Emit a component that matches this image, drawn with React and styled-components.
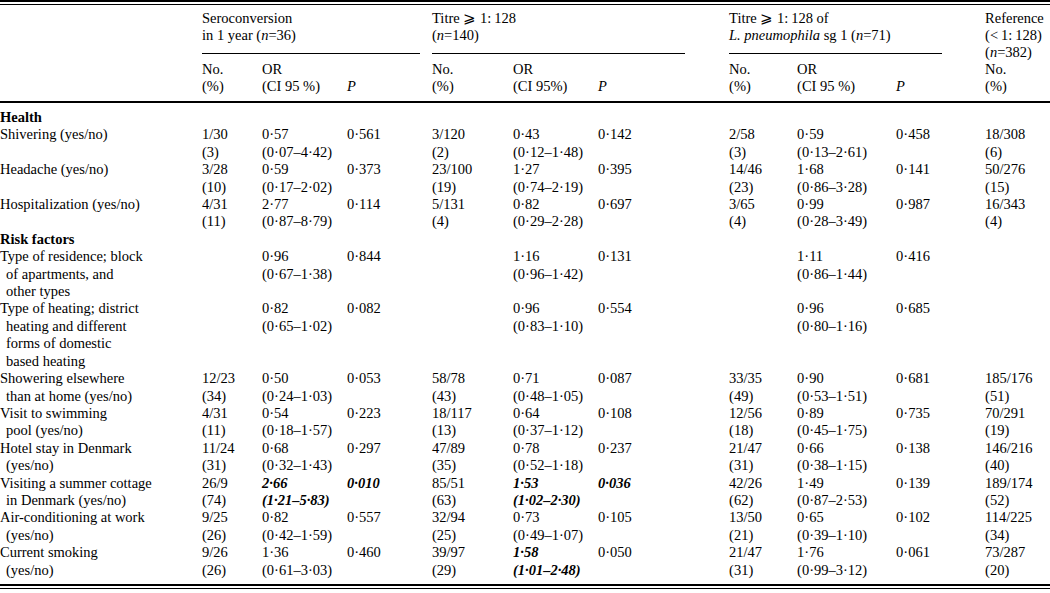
import React from 'react'
import styled, { createGlobalStyle } from 'styled-components'

const GlobalStyle = createGlobalStyle`
  html, body {
    margin: 0;
    padding: 0;
    background: #ffffff;
  }
  body {
    font-family: "Liberation Serif", "Times New Roman", "DejaVu Serif", serif;
    color: #000000;
  }
`

const Page = styled.div`
  width: 1050px;
  font-size: 14.5px;
`

const TopRule = styled.div`
  height: 2px;
  border-top: 2px solid #000;
  border-bottom: 1px solid #000;
`

const BottomRule = styled.div`
  margin-top: 5px;
  height: 2px;
  border-top: 2px solid #000;
  border-bottom: 1px solid #000;
`

const Table = styled.table`
  width: 1050px;
  table-layout: fixed;
  border-collapse: collapse;
  border-spacing: 0;
  font-size: inherit;

  th {
    font-weight: normal;
    text-align: left;
    padding: 0;
  }
  td {
    padding: 0;
  }
`

const I = styled.i`
  font-style: italic;
`

const HeadCell = styled.th`
  border-bottom: 2px solid #000;
`

const GroupCell = styled.th`
  vertical-align: top;
  line-height: 17px;
  padding-top: 5px !important;
`

const GroupLabel = styled.div`
  margin-right: ${p => p.$gap}px;
  padding-bottom: 9px;
  border-bottom: 1px solid #000;
  white-space: nowrap;
`

const SubHead = styled.th`
  vertical-align: top;
  line-height: 17px;
  padding: 7px 0 6px 0 !important;
  border-bottom: 2px solid #000;
  white-space: nowrap;
`

const RefHead = styled.th`
  vertical-align: bottom;
  line-height: 17px;
  padding-bottom: 6px !important;
  border-bottom: 2px solid #000;
  white-space: nowrap;
`

const SectionCell = styled.td`
  font-weight: bold;
  line-height: 17.4px;
  padding-top: ${p => (p.$lead ? '6px' : '0')} !important;
`

const LabelCell = styled.td`
  vertical-align: top;
  line-height: 17.4px;
`

const LabelLine = styled.div`
  padding-left: ${p => (p.$cont ? '6px' : '0')};
  white-space: nowrap;
`

const Cell = styled.td`
  vertical-align: top;
  line-height: 17.4px;
  white-space: nowrap;
  font-weight: ${p => (p.$strong ? 'bold' : 'normal')};
  font-style: ${p => (p.$strong ? 'italic' : 'normal')};
`

const groups = [
  { key: 'sero', span: 3, gap: 12, lines: ['Seroconversion', <>in 1 year (<I>n</I>=36)</>] },
  { key: 'titre', span: 3, gap: 44, lines: [<>Titre ⩾ 1:{'\u2009'}128</>, <>(<I>n</I>=140)</>] },
  { key: 'lpn', span: 3, gap: 43, lines: [<>Titre ⩾ 1:{'\u2009'}128 of</>, <><I>L. pneumophila</I> sg 1 (<I>n</I>=71)</>] },
]

const subHeads = [
  ['No.', '(%)'], ['OR', '(CI 95 %)'], ['', <I key="p">P</I>],
  ['No.', '(%)'], ['OR', '(CI 95%)'], ['', <I key="p">P</I>],
  ['No.', '(%)'], ['OR', '(CI 95 %)'], ['', <I key="p">P</I>],
]

// each group: [no, pct, or, ci, p, strong?]
const rows = [
  { section: 'Health' },
  {
    label: ['Shivering (yes/no)'],
    groups: [
      ['1/30', '(3)', '0·57', '(0·07–4·42)', '0·561'],
      ['3/120', '(2)', '0·43', '(0·12–1·48)', '0·142'],
      ['2/58', '(3)', '0·59', '(0·13–2·61)', '0·458'],
    ],
    ref: ['18/308', '(6)'],
  },
  {
    label: ['Headache (yes/no)'],
    groups: [
      ['3/28', '(10)', '0·59', '(0·17–2·02)', '0·373'],
      ['23/100', '(19)', '1·27', '(0·74–2·19)', '0·395'],
      ['14/46', '(23)', '1·68', '(0·86–3·28)', '0·141'],
    ],
    ref: ['50/276', '(15)'],
  },
  {
    label: ['Hospitalization (yes/no)'],
    groups: [
      ['4/31', '(11)', '2·77', '(0·87–8·79)', '0·114'],
      ['5/131', '(4)', '0·82', '(0·29–2·28)', '0·697'],
      ['3/65', '(4)', '0·99', '(0·28–3·49)', '0·987'],
    ],
    ref: ['16/343', '(4)'],
  },
  { section: 'Risk factors' },
  {
    label: ['Type of residence; block', 'of apartments, and', 'other types'],
    groups: [
      ['', '', '0·96', '(0·67–1·38)', '0·844'],
      ['', '', '1·16', '(0·96–1·42)', '0·131'],
      ['', '', '1·11', '(0·86–1·44)', '0·416'],
    ],
    ref: ['', ''],
  },
  {
    label: ['Type of heating; district', 'heating and different', 'forms of domestic', 'based heating'],
    groups: [
      ['', '', '0·82', '(0·65–1·02)', '0·082'],
      ['', '', '0·96', '(0·83–1·10)', '0·554'],
      ['', '', '0·96', '(0·80–1·16)', '0·685'],
    ],
    ref: ['', ''],
  },
  {
    label: ['Showering elsewhere', 'than at home (yes/no)'],
    groups: [
      ['12/23', '(34)', '0·50', '(0·24–1·03)', '0·053'],
      ['58/78', '(43)', '0·71', '(0·48–1·05)', '0·087'],
      ['33/35', '(49)', '0·90', '(0·53–1·51)', '0·681'],
    ],
    ref: ['185/176', '(51)'],
  },
  {
    label: ['Visit to swimming', 'pool (yes/no)'],
    groups: [
      ['4/31', '(11)', '0·54', '(0·18–1·57)', '0·223'],
      ['18/117', '(13)', '0·64', '(0·37–1·12)', '0·108'],
      ['12/56', '(18)', '0·89', '(0·45–1·75)', '0·735'],
    ],
    ref: ['70/291', '(19)'],
  },
  {
    label: ['Hotel stay in Denmark', '(yes/no)'],
    groups: [
      ['11/24', '(31)', '0·68', '(0·32–1·43)', '0·297'],
      ['47/89', '(35)', '0·78', '(0·52–1·18)', '0·237'],
      ['21/47', '(31)', '0·66', '(0·38–1·15)', '0·138'],
    ],
    ref: ['146/216', '(40)'],
  },
  {
    label: ['Visiting a summer cottage', 'in Denmark (yes/no)'],
    groups: [
      ['26/9', '(74)', '2·66', '(1·21–5·83)', '0·010', 'or p'],
      ['85/51', '(63)', '1·53', '(1·02–2·30)', '0·036', 'or p'],
      ['42/26', '(62)', '1·49', '(0·87–2·53)', '0·139'],
    ],
    ref: ['189/174', '(52)'],
  },
  {
    label: ['Air-conditioning at work', '(yes/no)'],
    groups: [
      ['9/25', '(26)', '0·82', '(0·42–1·59)', '0·557'],
      ['32/94', '(25)', '0·73', '(0·49–1·07)', '0·105'],
      ['13/50', '(21)', '0·65', '(0·39–1·10)', '0·102'],
    ],
    ref: ['114/225', '(34)'],
  },
  {
    label: ['Current smoking', '(yes/no)'],
    groups: [
      ['9/26', '(26)', '1·36', '(0·61–3·03)', '0·460'],
      ['39/97', '(29)', '1·58', '(1·01–2·48)', '0·050', 'or'],
      ['21/47', '(31)', '1·76', '(0·99–3·12)', '0·061'],
    ],
    ref: ['73/287', '(20)'],
  },
]

const colWidths = [202, 60, 85, 85, 81, 85, 131, 68, 99, 89, 65]

const App = () => {
  return (
    <Page>
      <GlobalStyle />
      <TopRule />
      <Table>
        <colgroup>
          {colWidths.map((w, i) => <col key={i} style={{ width: w }} />)}
        </colgroup>
        <thead>
          <tr>
            <HeadCell rowSpan={2} />
            {groups.map(g => (
              <GroupCell key={g.key} colSpan={g.span}>
                <GroupLabel $gap={g.gap}>
                  {g.lines[0]}<br />{g.lines[1]}
                </GroupLabel>
              </GroupCell>
            ))}
            <RefHead rowSpan={2}>
              Reference<br />(&lt;{'\u2009'}1:{'\u2009'}128)<br />(<I>n</I>=382)<br />No.<br />(%)
            </RefHead>
          </tr>
          <tr>
            {subHeads.map((s, i) => (
              <SubHead key={i}>{s[0]}<br />{s[1]}</SubHead>
            ))}
          </tr>
        </thead>
        <tbody>
          {rows.map((r, i) => r.section ? (
            <tr key={i}>
              <SectionCell colSpan={11} $lead={i === 0}>{r.section}</SectionCell>
            </tr>
          ) : (
            <tr key={i}>
              <LabelCell>
                {r.label.map((l, j) => <LabelLine key={j} $cont={j > 0}>{l}</LabelLine>)}
              </LabelCell>
              {r.groups.map((g, j) => {
                const strong = g[5] || ''
                return (
                  <React.Fragment key={j}>
                    <Cell>{g[0]}<br />{g[1]}</Cell>
                    <Cell $strong={strong.includes('or')}>{g[2]}<br />{g[3]}</Cell>
                    <Cell $strong={strong.includes('p')}>{g[4]}</Cell>
                  </React.Fragment>
                )
              })}
              <Cell>{r.ref[0]}<br />{r.ref[1]}</Cell>
            </tr>
          ))}
        </tbody>
      </Table>
      <BottomRule />
    </Page>
  )
}

export default App
